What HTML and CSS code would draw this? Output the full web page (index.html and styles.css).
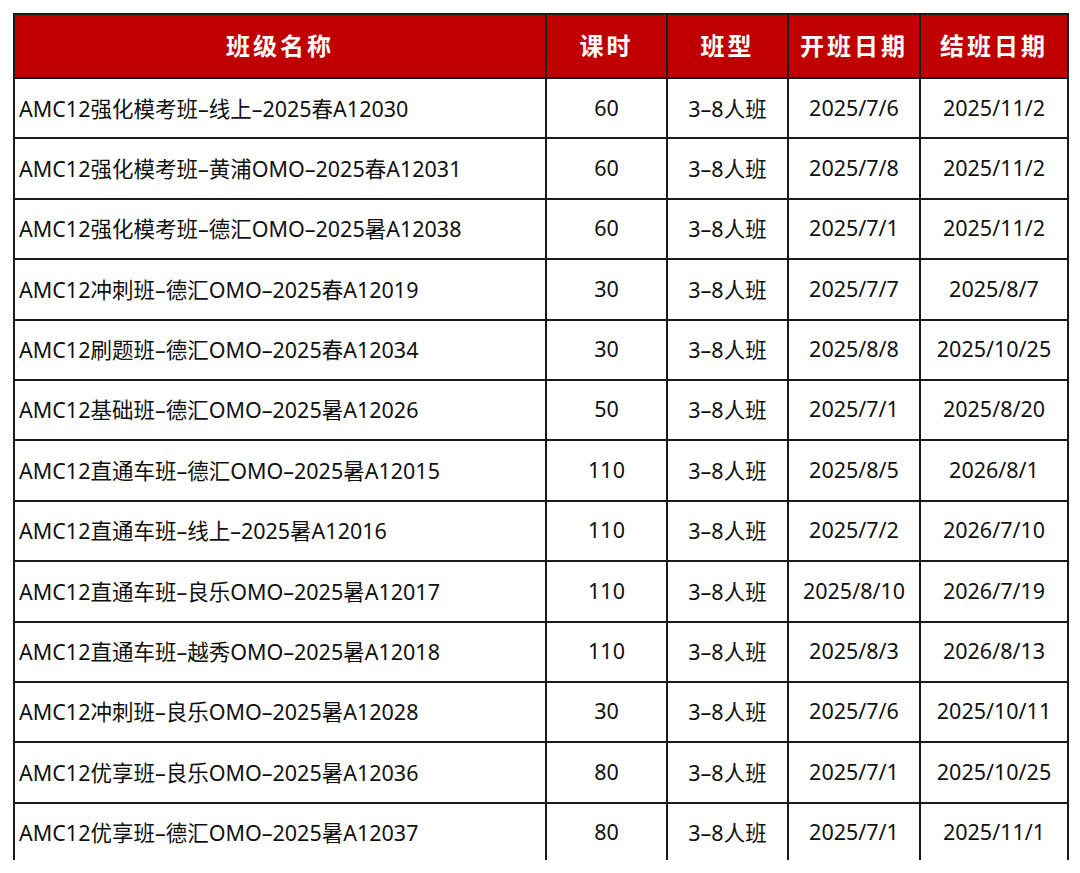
FILE: index.html
```html
<!DOCTYPE html>
<html lang="zh-CN">
<head>
<meta charset="utf-8">
<link rel="stylesheet" href="styles.css">
</head>
<body>
<div class="sheet">
<table class="classes">
<colgroup>
<col class="c-name"><col class="c-hours"><col class="c-type"><col class="c-start"><col class="c-end">
</colgroup>
<thead>
<tr><th>班级名称</th><th>课时</th><th>班型</th><th>开班日期</th><th>结班日期</th></tr>
</thead>
<tbody>
<tr><td class="name">AMC12强化模考班–线上–2025春A12030</td><td>60</td><td>3–8人班</td><td>2025/7/6</td><td>2025/11/2</td></tr>
<tr><td class="name">AMC12强化模考班–黄浦OMO–2025春A12031</td><td>60</td><td>3–8人班</td><td>2025/7/8</td><td>2025/11/2</td></tr>
<tr><td class="name">AMC12强化模考班–德汇OMO–2025暑A12038</td><td>60</td><td>3–8人班</td><td>2025/7/1</td><td>2025/11/2</td></tr>
<tr><td class="name">AMC12冲刺班–德汇OMO–2025春A12019</td><td>30</td><td>3–8人班</td><td>2025/7/7</td><td>2025/8/7</td></tr>
<tr><td class="name">AMC12刷题班–德汇OMO–2025春A12034</td><td>30</td><td>3–8人班</td><td>2025/8/8</td><td>2025/10/25</td></tr>
<tr><td class="name">AMC12基础班–德汇OMO–2025暑A12026</td><td>50</td><td>3–8人班</td><td>2025/7/1</td><td>2025/8/20</td></tr>
<tr><td class="name">AMC12直通车班–德汇OMO–2025暑A12015</td><td>110</td><td>3–8人班</td><td>2025/8/5</td><td>2026/8/1</td></tr>
<tr><td class="name">AMC12直通车班–线上–2025暑A12016</td><td>110</td><td>3–8人班</td><td>2025/7/2</td><td>2026/7/10</td></tr>
<tr><td class="name">AMC12直通车班–良乐OMO–2025暑A12017</td><td>110</td><td>3–8人班</td><td>2025/8/10</td><td>2026/7/19</td></tr>
<tr><td class="name">AMC12直通车班–越秀OMO–2025暑A12018</td><td>110</td><td>3–8人班</td><td>2025/8/3</td><td>2026/8/13</td></tr>
<tr><td class="name">AMC12冲刺班–良乐OMO–2025暑A12028</td><td>30</td><td>3–8人班</td><td>2025/7/6</td><td>2025/10/11</td></tr>
<tr><td class="name">AMC12优享班–良乐OMO–2025暑A12036</td><td>80</td><td>3–8人班</td><td>2025/7/1</td><td>2025/10/25</td></tr>
<tr><td class="name">AMC12优享班–德汇OMO–2025暑A12037</td><td>80</td><td>3–8人班</td><td>2025/7/1</td><td>2025/11/1</td></tr>
</tbody>
</table>
</div>
</body>
</html>
```

FILE: styles.css
```css
html, body {
  margin: 0;
  padding: 0;
  background: #ffffff;
}

.sheet {
  padding: 13px 0 0 13px;
  height: 847px;
  overflow: hidden;
}

.classes {
  border-collapse: collapse;
  table-layout: fixed;
  width: 1054px;
  font-family: "Noto Sans", "Noto Sans CJK SC", sans-serif;
  color: #111111;
}

.c-name { width: 532px; }
.c-hours { width: 121px; }
.c-type { width: 121px; }
.c-start { width: 132px; }
.c-end { width: 148px; }

.classes th,
.classes td {
  border: 2px solid #1a1a1a;
  padding: 0;
  text-align: center;
  white-space: nowrap;
}

.classes th {
  background: #c00000;
  color: #ffffff;
  height: 58px;
  padding-bottom: 4px;
  font-size: 24px;
  font-weight: 700;
  letter-spacing: 3px;
}

.classes td {
  height: 56px;
  padding-bottom: 2.4px;
  font-size: 21.5px;
  font-weight: 400;
}

.classes td.name {
  text-align: left;
  padding-left: 4px;
}
```
